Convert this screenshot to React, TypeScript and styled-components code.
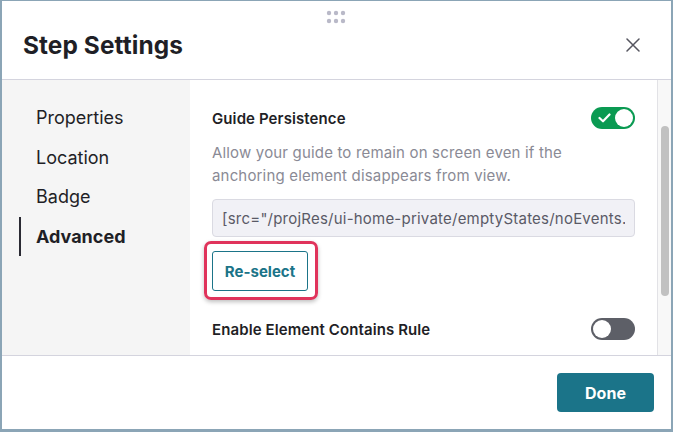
import React from "react";
import styled, { createGlobalStyle } from "styled-components";

const Global = createGlobalStyle`
  html, body { margin: 0; padding: 0; }
  body {
    font-family: Inter, "Noto Sans", "Liberation Sans", sans-serif;
    color: #1f1f26;
    -webkit-font-smoothing: antialiased;
  }
  * { box-sizing: border-box; }
`;

const Frame = styled.div`
  width: 673px;
  height: 432px;
  border-style: solid;
  border-color: #8ba5b6;
  border-width: 1px 2px 3px 2px;
  background: #ffffff;
  display: flex;
  flex-direction: column;
  overflow: hidden;
`;

const Header = styled.header`
  position: relative;
  height: 79px;
  flex: none;
  padding: 10px 30px 0 21px;
  display: flex;
  align-items: center;
  justify-content: space-between;
  border-bottom: 1px solid #d4d4de;
`;

const DragHandle = styled.svg`
  position: absolute;
  top: 9px;
  left: 50%;
  margin-left: -1px;
  transform: translateX(-50%);
`;

const Title = styled.h1`
  margin: 0;
  font-size: 24.4px;
  font-weight: 700;
  letter-spacing: 0.1px;
  color: #1f1f26;
`;

const CloseButton = styled.button`
  border: none;
  background: none;
  padding: 0;
  width: 16px;
  height: 16px;
  display: flex;
  align-items: center;
  justify-content: center;
  cursor: pointer;
`;

const Body = styled.div`
  flex: none;
  height: 276px;
  display: flex;
  border-bottom: 1px solid #d4d4de;
  overflow: hidden;
`;

const Sidebar = styled.nav`
  width: 188px;
  flex: none;
  background: #f5f5f5;
  padding-top: 18px;
  display: flex;
  flex-direction: column;
`;

const NavItem = styled.div<{ $active?: boolean }>`
  height: 39.6px;
  flex: none;
  margin-left: 17px;
  padding-left: 15px;
  display: flex;
  align-items: center;
  font-size: 18px;
  font-weight: ${(p) => (p.$active ? 700 : 400)};
  color: #1f1f26;
  border-left: 2px solid ${(p) => (p.$active ? "#2a2a33" : "transparent")};
`;

const Content = styled.section`
  flex: 1;
  min-width: 0;
  padding: 27px 22px 0 22px;
  overflow: hidden;
  display: flex;
  flex-direction: column;
  align-items: stretch;
  & > * { flex-shrink: 0; }
`;

const SettingRow = styled.div<{ $gap?: number }>`
  display: flex;
  align-items: center;
  justify-content: space-between;
  height: 22px;
  margin-top: ${(p) => p.$gap ?? 0}px;
`;

const SettingLabel = styled.span`
  font-size: 15px;
  font-weight: 600;
  letter-spacing: 0.1px;
  color: #1f1f26;
`;

const Toggle = styled.div<{ $on?: boolean }>`
  width: 44px;
  height: 22px;
  border-radius: 11px;
  background: ${(p) => (p.$on ? "#0a9a52" : "#5d5f67")};
  display: flex;
  align-items: center;
  justify-content: ${(p) => (p.$on ? "space-between" : "flex-start")};
  padding: 0 2px 0 ${(p) => (p.$on ? "7px" : "2px")};
  flex: none;
`;

const Knob = styled.div`
  width: 18px;
  height: 18px;
  border-radius: 50%;
  background: #ffffff;
`;

const Description = styled.p`
  margin: 12px 0 0 0;
  font-size: 15px;
  line-height: 23px;
  letter-spacing: 0.17px;
  color: #8a8a95;
  max-width: 370px;
`;

const SelectorField = styled.div`
  margin-top: 12px;
  height: 38px;
  border: 1px solid #dadae2;
  border-radius: 4px;
  background: #f1f1f6;
  padding: 0 9px;
  display: flex;
  align-items: center;
`;

const SelectorText = styled.span`
  flex: 1;
  min-width: 0;
  font-size: 15px;
  letter-spacing: 0.22px;
  color: #5a5a66;
  white-space: nowrap;
  overflow: hidden;
`;

const ButtonSlot = styled.div`
  margin-top: 14px;
  align-self: flex-start;
  position: relative;
  &::after {
    content: "";
    position: absolute;
    inset: -10px -10px -9px -8px;
    border: 3px solid #e0335b;
    border-radius: 7px;
    box-shadow: 0 2px 4px rgba(0, 0, 0, 0.25);
    pointer-events: none;
  }
`;

const OutlineButton = styled.button`
  width: 96px;
  height: 40px;
  border: 1px solid #1b7488;
  border-radius: 3px;
  background: #ffffff;
  color: #1b7488;
  font-family: inherit;
  font-size: 15px;
  font-weight: 700;
  padding: 0;
  cursor: pointer;
`;

const ScrollTrack = styled.div`
  width: 14px;
  flex: none;
  background: #f8f8f8;
  border-left: 1px solid #e2e2e6;
  padding: 46px 0 0 3px;
`;

const ScrollThumb = styled.div`
  width: 8px;
  height: 170px;
  border-radius: 4px;
  background: #c1c1c1;
`;

const Footer = styled.footer`
  flex: 1;
  display: flex;
  align-items: center;
  justify-content: flex-end;
  padding: 0 17px 0 0;
`;

const PrimaryButton = styled.button`
  width: 97px;
  height: 39px;
  border: none;
  border-radius: 4px;
  background: #1b7489;
  color: #ffffff;
  font-family: inherit;
  font-size: 16px;
  font-weight: 700;
  cursor: pointer;
`;

const navItems = ["Properties", "Location", "Badge", "Advanced"];

export default function App() {
  return (
    <>
      <Global />
      <Frame>
        <Header>
          <DragHandle width="20" height="14" viewBox="0 0 20 14">
            {[0, 1].map((r) =>
              [0, 1, 2].map((c) => (
                <circle key={`${r}${c}`} cx={3 + c * 7} cy={3 + r * 8} r="2.2" fill="#b9b9c8" />
              ))
            )}
          </DragHandle>
          <Title>Step Settings</Title>
          <CloseButton aria-label="Close">
            <svg width="14" height="14" viewBox="0 0 14 14">
              <path d="M1 1 L13 13 M13 1 L1 13" stroke="#55555f" strokeWidth="1.5" strokeLinecap="round" />
            </svg>
          </CloseButton>
        </Header>
        <Body>
          <Sidebar>
            {navItems.map((n) => (
              <NavItem key={n} $active={n === "Advanced"}>
                {n}
              </NavItem>
            ))}
          </Sidebar>
          <Content>
            <SettingRow>
              <SettingLabel>Guide Persistence</SettingLabel>
              <Toggle $on>
                <svg width="13" height="10" viewBox="0 0 13 10">
                  <path d="M1.5 5 L5 8.3 L11.5 1.5" stroke="#ffffff" strokeWidth="2.2" fill="none" strokeLinecap="round" strokeLinejoin="round" />
                </svg>
                <Knob />
              </Toggle>
            </SettingRow>
            <Description>
              Allow your guide to remain on screen even if the anchoring element disappears from view.
            </Description>
            <SelectorField>
              <SelectorText>[src="/projRes/ui-home-private/emptyStates/noEvents.svg"]</SelectorText>
            </SelectorField>
            <ButtonSlot>
              <OutlineButton>Re-select</OutlineButton>
            </ButtonSlot>
            <SettingRow $gap={27}>
              <SettingLabel>Enable Element Contains Rule</SettingLabel>
              <Toggle>
                <Knob />
              </Toggle>
            </SettingRow>
          </Content>
          <ScrollTrack>
            <ScrollThumb />
          </ScrollTrack>
        </Body>
        <Footer>
          <PrimaryButton>Done</PrimaryButton>
        </Footer>
      </Frame>
    </>
  );
}
